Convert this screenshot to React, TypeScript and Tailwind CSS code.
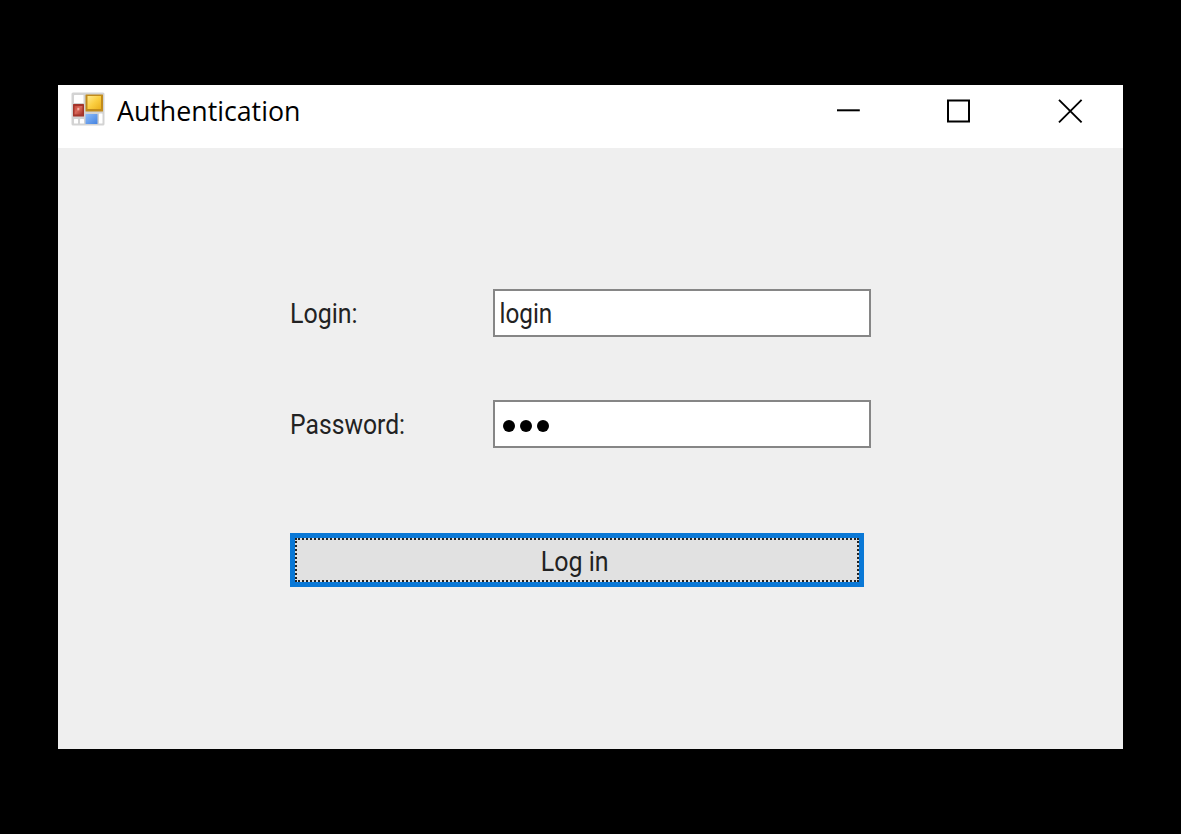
import { useState } from "react";

function AppIcon() {
  return (
    <svg width="34" height="34" viewBox="0 0 34 34" aria-hidden="true">
      <defs>
        <linearGradient id="gold" x1="0" y1="0" x2="1" y2="1">
          <stop offset="0" stopColor="#ffe88e" />
          <stop offset="0.5" stopColor="#fbcf42" />
          <stop offset="1" stopColor="#ebb01c" />
        </linearGradient>
        <linearGradient id="red" x1="0" y1="0" x2="1" y2="1">
          <stop offset="0" stopColor="#c8493c" />
          <stop offset="0.45" stopColor="#d8685a" />
          <stop offset="1" stopColor="#a8342a" />
        </linearGradient>
        <linearGradient id="blue" x1="0" y1="0" x2="1" y2="1">
          <stop offset="0" stopColor="#8dbcfa" />
          <stop offset="1" stopColor="#4583e0" />
        </linearGradient>
      </defs>
      <rect x="0.5" y="0.5" width="33" height="33" rx="1.5" fill="#d3d3d3" />
      <rect x="3" y="3" width="9.5" height="8" rx="0.5" fill="#fff" />
      <rect x="3" y="27" width="4" height="4.5" rx="0.5" fill="#fff" />
      <rect x="9" y="27" width="4" height="4.5" rx="0.5" fill="#fff" />
      <rect x="28" y="21.5" width="3.5" height="10" rx="0.5" fill="#fff" />
      <rect x="14.5" y="2.5" width="17.5" height="17" rx="0.5" fill="#c18b1c" />
      <rect x="16.5" y="4" width="13.5" height="13" fill="url(#gold)" />
      <rect x="2" y="12" width="11" height="12.5" rx="0.5" fill="#a3352b" />
      <rect x="3.5" y="14" width="8" height="8.5" fill="url(#red)" />
      <rect x="6.3" y="15.8" width="2" height="2.5" fill="#f3b1a4" />
      <rect x="14.5" y="22" width="12" height="10" rx="0.5" fill="url(#blue)" />
    </svg>
  );
}

export default function App() {
  const [login, setLogin] = useState("login");
  return (
    <div className="h-[834px] w-[1181px] bg-black px-[58px] pt-[85px]">
      <main className="flex h-[664px] w-[1065px] flex-col bg-[#efefef] text-black">
        <header className="flex h-[63px] shrink-0 items-start bg-white pl-[13px]">
          <div className="mt-[7px]">
            <AppIcon />
          </div>
          <h1 className="ml-3 mt-[5px] flex-1 font-['Open_Sans',sans-serif] text-[28px] leading-[40px]">
            <span className="inline-block origin-left scale-x-[0.955]">Authentication</span>
          </h1>
          <div className="mr-[40px] mt-[13px] flex gap-[86px]">
            <button aria-label="Minimize">
              <svg width="25" height="26" fill="none" stroke="#000" strokeWidth="2">
                <path d="M2 12.3H24.8" />
              </svg>
            </button>
            <button aria-label="Maximize">
              <svg width="25" height="26" fill="none" stroke="#000" strokeWidth="2">
                <rect x="2" y="2.5" width="21" height="21" />
              </svg>
            </button>
            <button aria-label="Close">
              <svg width="26" height="26" fill="none" stroke="#000" strokeWidth="1.9">
                <path d="M2 1.8L24.6 24.4M24.6 1.8L2 24.4" />
              </svg>
            </button>
          </div>
        </header>

        <form
          className="flex flex-col pl-[232px] pt-[141px] font-['Roboto',sans-serif] text-[27px] text-[#222]"
          onSubmit={(e) => e.preventDefault()}
        >
          <div className="flex h-[48px] items-center">
            <label htmlFor="login" className="w-[203px] pt-[2px]">
              <span className="inline-block origin-left scale-x-[0.925]">Login:</span>
            </label>
            <div className="h-[48px] w-[378px] border-2 border-[#868686] bg-white">
              <input
                id="login"
                value={login}
                onChange={(e) => setLogin(e.target.value)}
                className="h-full w-[400px] origin-left scale-x-[0.9] pl-[5px] pt-[2px] outline-none"
              />
            </div>
          </div>
          <div className="mt-[63px] flex h-[48px] items-center">
            <label htmlFor="password" className="w-[203px] pt-[2px]">
              <span className="inline-block origin-left scale-x-[0.915]">Password:</span>
            </label>
            <div
              id="password"
              className="flex h-[48px] w-[378px] items-center gap-[5px] border-2 border-[#868686] bg-white pl-[8px] pt-[3px]"
            >
              <span className="size-[12px] rounded-full bg-black" />
              <span className="size-[12px] rounded-full bg-black" />
              <span className="size-[12px] rounded-full bg-black" />
            </div>
          </div>
          <button className="mt-[85px] flex h-[54px] w-[574px] border-[5px] border-[#0a78d6] bg-[#e1e1e1]">
            <span className="flex h-full w-full items-center justify-center border-2 border-dotted border-[#222] pr-[4px] pt-[5px]">
              <span className="inline-block scale-x-[0.925]">Log in</span>
            </span>
          </button>
        </form>
      </main>
    </div>
  );
}
